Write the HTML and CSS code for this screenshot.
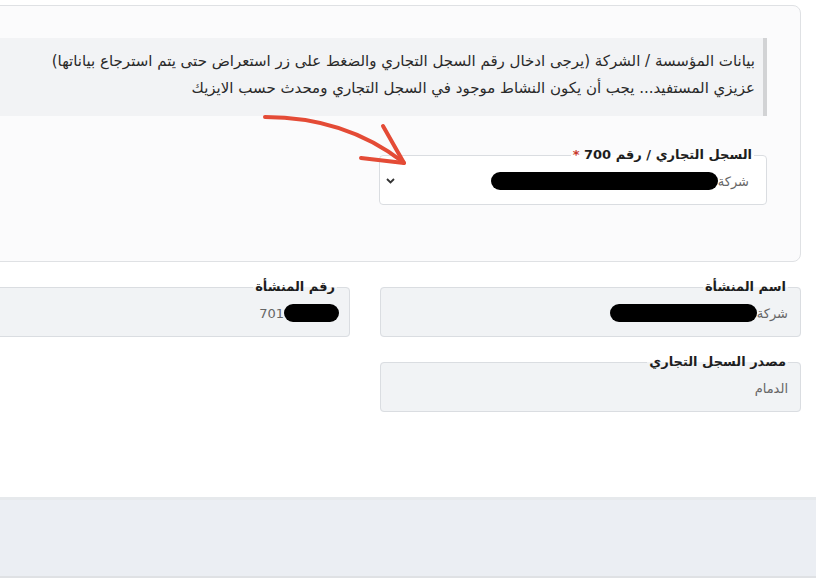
FILE: index.html
```html
<!DOCTYPE html>
<html lang="ar" dir="rtl">
<head>
	<meta charset="UTF-8">
	<title>بيانات المنشأة</title>
	<link rel="stylesheet" href="styles.css">
</head>
<body>
	<div class="page">
		<!-- بيانات السجل -->
		<section class="card">
			<div class="notice">
				<p>بيانات المؤسسة / الشركة (يرجى ادخال رقم السجل التجاري والضغط على زر استعراض حتى يتم استرجاع بياناتها)</p>
				<p>عزيزي المستفيد... يجب أن يكون النشاط موجود في السجل التجاري ومحدث حسب الايزيك</p>
			</div>
			<fieldset class="field field-select">
				<legend>السجل التجاري / رقم 700 <span class="req">*</span></legend>
				<div class="val">
					<span>شركة</span><span class="mask mask-cr"></span>
					<span class="chev"><svg width="9" height="6" viewBox="0 0 9 6"><path d="M1 1l3.5 3.5L8 1" fill="none" stroke="#333" stroke-width="1.8"/></svg></span>
				</div>
			</fieldset>
		</section>

		<div class="grid">
			<fieldset class="field">
				<legend>اسم المنشأة</legend>
				<div class="val"><span>شركة</span><span class="mask mask-name"></span></div>
			</fieldset>
			<fieldset class="field">
				<legend>رقم المنشأة</legend>
				<div class="val"><span class="mask mask-num"></span><span class="num">701</span></div>
			</fieldset>
			<fieldset class="field">
				<legend>مصدر السجل التجاري</legend>
				<div class="val"><span>الدمام</span></div>
			</fieldset>
		</div>
	</div>
	<footer class="foot"></footer>

	<!-- سهم التوضيح -->
	<svg class="arrow" width="816" height="578" viewBox="0 0 816 578">
		<g fill="none" stroke="#e44b36" stroke-width="4" stroke-linecap="round">
			<path d="M265 117 Q345 117 403 162"/>
			<path d="M383 126 L404 163"/>
			<path d="M361 158 L404 163"/>
		</g>
	</svg>
</body>
</html>
```

FILE: styles.css
```css
html,body{margin:0;padding:0;}
body{background:#fff;overflow:hidden;font-family:"DejaVu Sans","Noto Sans",sans-serif;color:#222;position:relative;height:578px;}
.page{width:1200px;margin-right:15px;padding-top:5px;}

.card{box-sizing:border-box;height:257px;border:1px solid #dfe1e4;border-radius:8px;background:#fbfbfc;padding:32px 33px;}
.notice{box-sizing:border-box;height:78px;background:#f2f3f5;border-right:4px solid #d2d3d5;padding:10px 8px 0 0;}
.notice p{margin:0;font-size:15px;line-height:27px;color:#2a2a2a;white-space:nowrap;}

.field{box-sizing:border-box;margin:0;min-width:0;border:1px solid #dadde1;border-radius:4px;background:#f1f3f5;padding:0 12px 14px;}
.field legend{padding:0 2px;font-size:13px;font-weight:bold;line-height:20px;color:#1e1e1e;}
.field .val{display:flex;align-items:center;height:18px;margin-top:7px;font-size:13px;color:#666;}
.field-select{width:388px;margin-top:29px;background:#fff;}
.field-select .val{padding-right:5px;}
.req{color:#c9392a;}
.chev{margin-right:auto;margin-left:-6px;display:flex;}
.mask{display:inline-block;height:18px;background:#000;border-radius:9px;}
.mask-cr{width:227px;}
.mask-name{width:147px;}
.mask-num{width:55px;margin-right:-2px;}
.num{order:2;}

.grid{display:grid;grid-template-columns:421px 421px;column-gap:30px;row-gap:15px;margin-top:15px;}

.foot{box-sizing:border-box;position:absolute;top:497px;left:0;right:0;height:81px;background:#ebeef3;border-top:3px solid #e6e9ec;border-bottom:2px solid #dfe1e4;}
.arrow{position:absolute;top:0;left:0;pointer-events:none;}
```
